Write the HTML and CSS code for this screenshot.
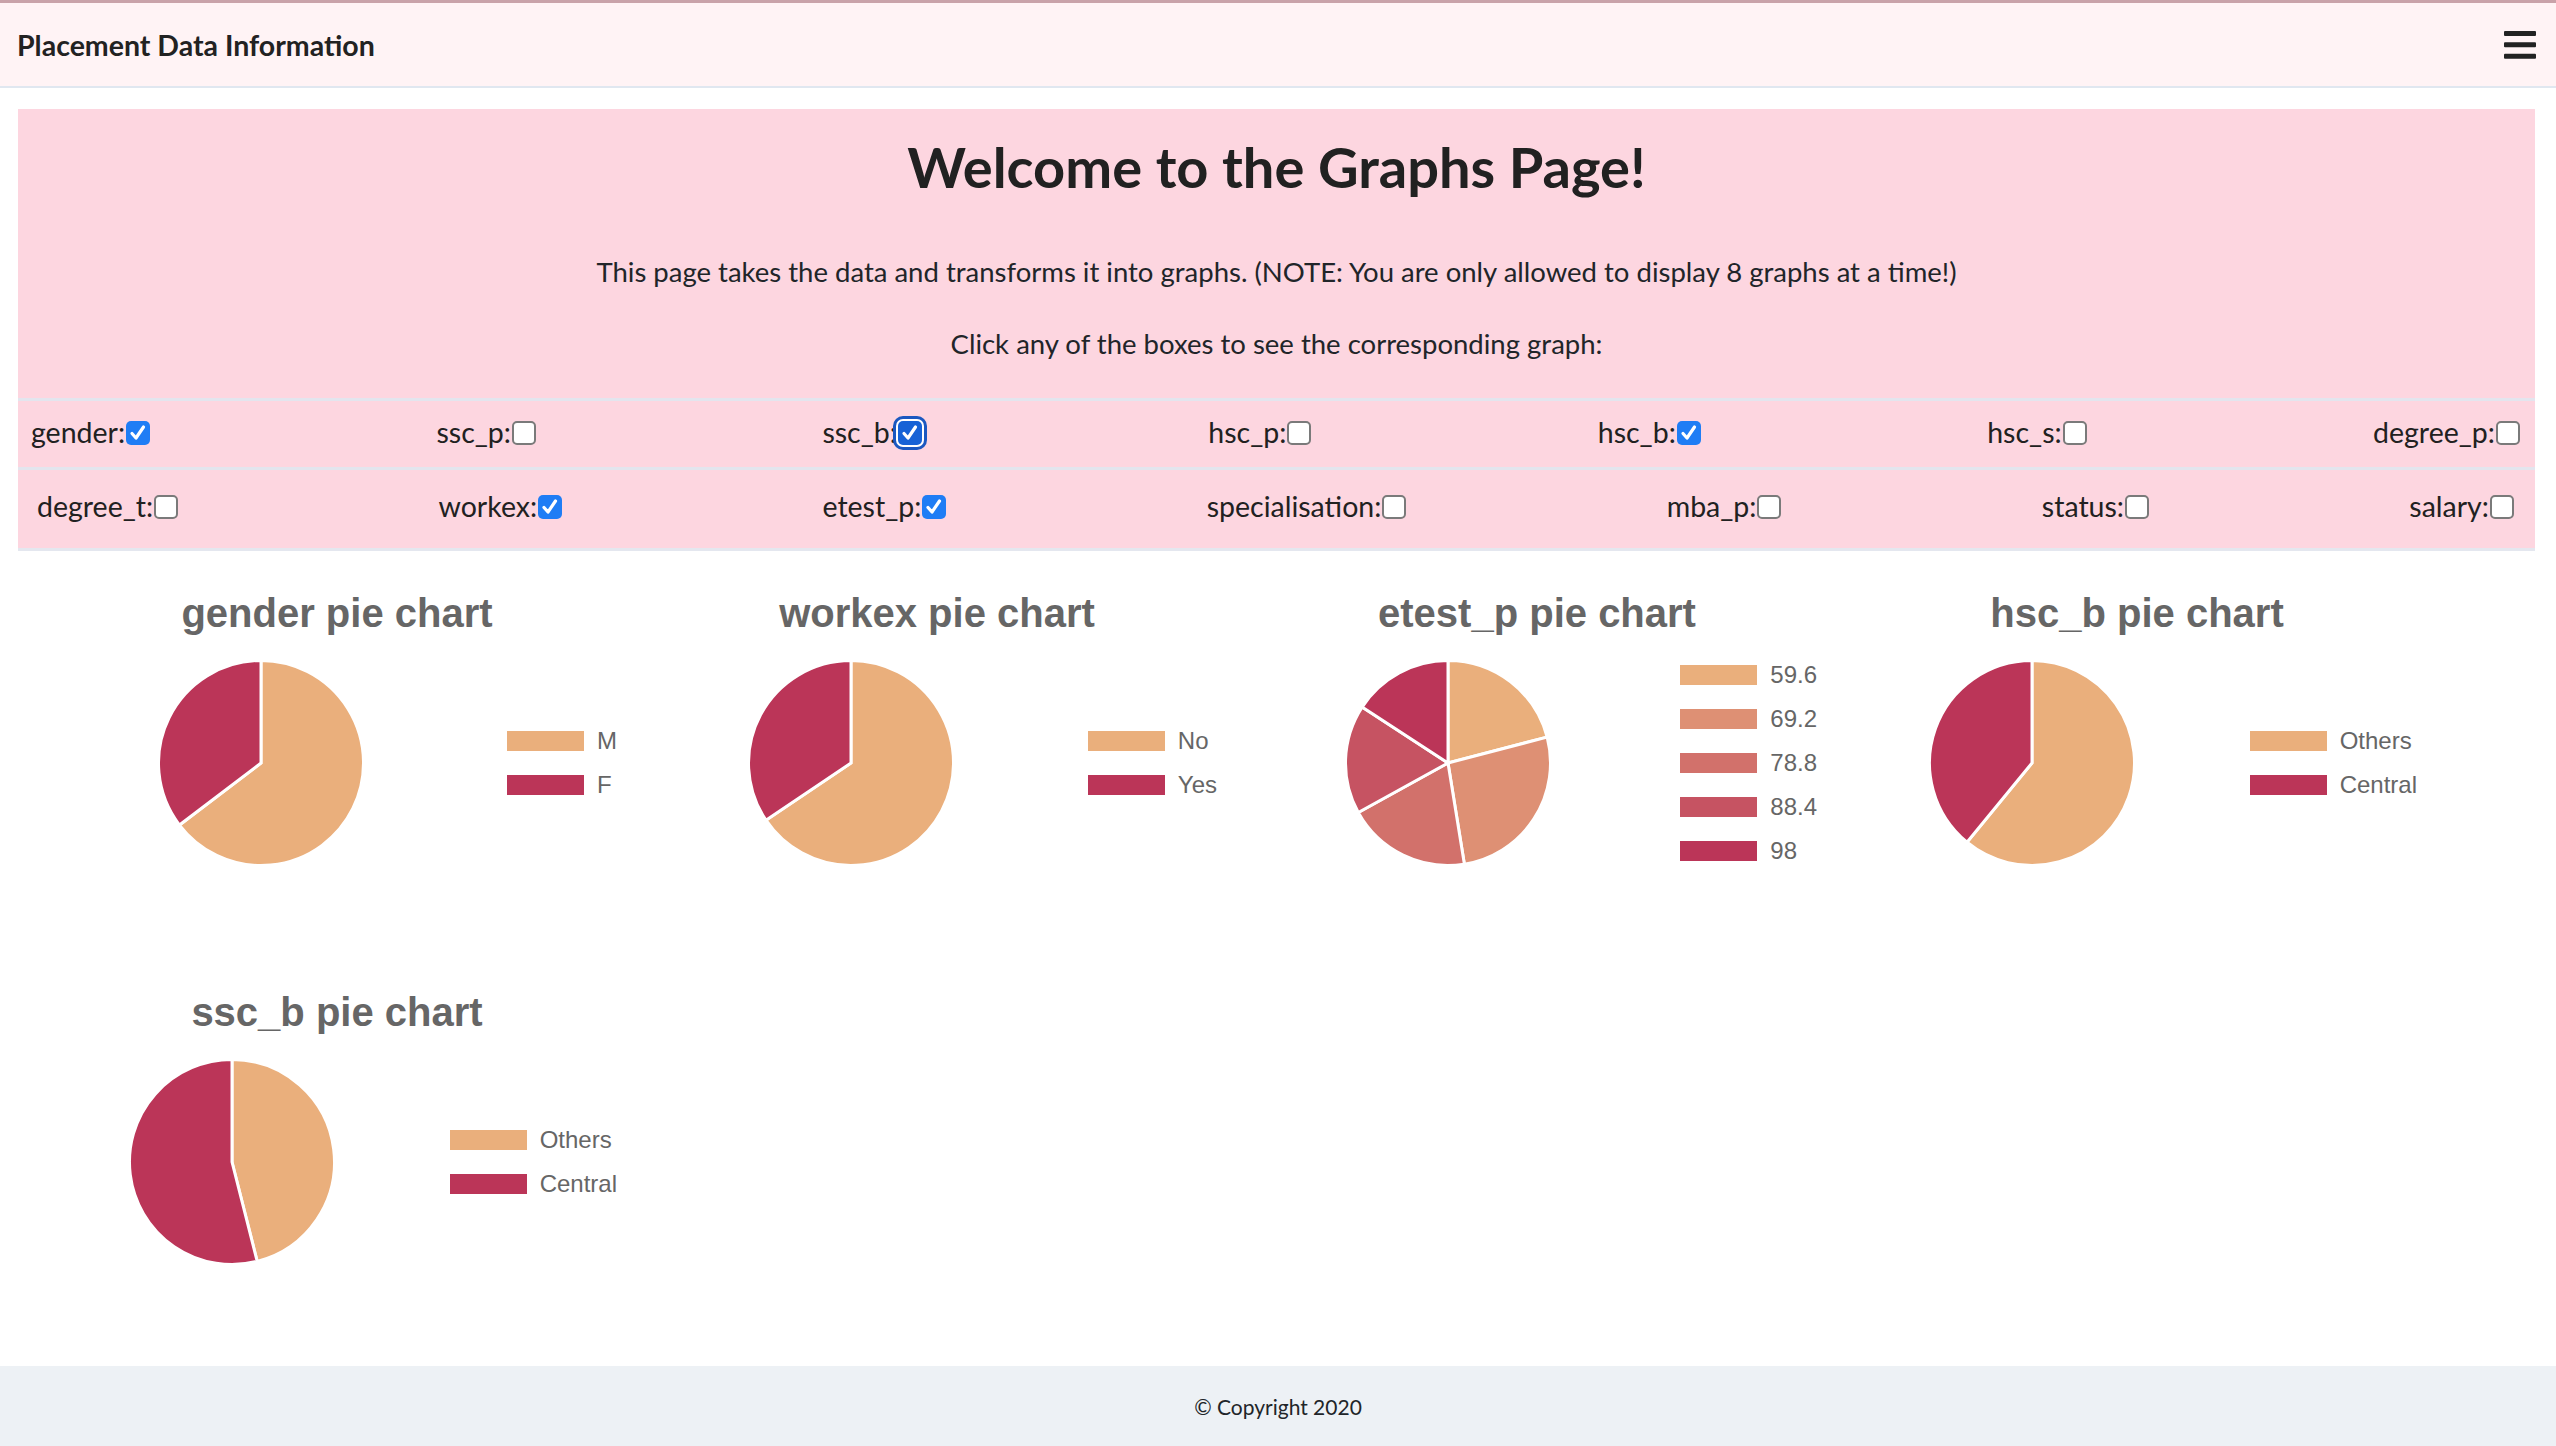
FILE: index.html
```html
<!DOCTYPE html>
<html lang="en">
<head>
<meta charset="utf-8">
<title>Placement Data Information - Graphs</title>
<link rel="stylesheet" href="styles.css">
</head>
<body>
<nav class="navbar">
  <span class="brand">Placement Data Information</span>
  <button class="toggler" aria-label="Toggle navigation">
    <svg width="32" height="28" viewBox="0 0 32 28"><rect x="0" y="0" width="32" height="5" rx="1"/><rect x="0" y="11.3" width="32" height="5" rx="1"/><rect x="0" y="22.7" width="32" height="5" rx="1"/></svg>
  </button>
</nav>
<main>
  <section class="jumbo">
    <h1>Welcome to the Graphs Page!</h1>
    <p class="lead1">This page takes the data and transforms it into graphs. (NOTE: You are only allowed to display 8 graphs at a time!)</p>
    <p class="lead2">Click any of the boxes to see the corresponding graph:</p>
    <div class="opts">
      <div class="opt-row r1">
        <label class="opt">gender:<span class="cb on"><svg viewBox="0 0 24 24"><path d="M6 12.5 L10 17 L17.5 6"/></svg></span></label>
        <label class="opt">ssc_p:<span class="cb"></span></label>
        <label class="opt">ssc_b:<span class="cb on focus"><svg viewBox="0 0 24 24"><path d="M6 12.5 L10 17 L17.5 6"/></svg></span></label>
        <label class="opt">hsc_p:<span class="cb"></span></label>
        <label class="opt">hsc_b:<span class="cb on"><svg viewBox="0 0 24 24"><path d="M6 12.5 L10 17 L17.5 6"/></svg></span></label>
        <label class="opt">hsc_s:<span class="cb"></span></label>
        <label class="opt">degree_p:<span class="cb"></span></label>
      </div>
      <div class="opt-row r2">
        <label class="opt">degree_t:<span class="cb"></span></label>
        <label class="opt">workex:<span class="cb on"><svg viewBox="0 0 24 24"><path d="M6 12.5 L10 17 L17.5 6"/></svg></span></label>
        <label class="opt">etest_p:<span class="cb on"><svg viewBox="0 0 24 24"><path d="M6 12.5 L10 17 L17.5 6"/></svg></span></label>
        <label class="opt">specialisation:<span class="cb"></span></label>
        <label class="opt">mba_p:<span class="cb"></span></label>
        <label class="opt">status:<span class="cb"></span></label>
        <label class="opt">salary:<span class="cb"></span></label>
      </div>
    </div>
  </section>

  <section class="charts">
    <div class="chart">
      <div class="chart-title">gender pie chart</div>
      <div class="chart-body">
        <div class="plot">
          <svg class="pie" width="210" height="210" viewBox="0 0 210 210">
            <path class="c1" d="M105 105 L105 2.5 A102.5 102.5 0 1 1 23.43 167.06 Z"/>
            <path class="c5" d="M105 105 L23.43 167.06 A102.5 102.5 0 0 1 105 2.5 Z"/>
          </svg>
        </div>
        <ul class="legend">
          <li><span class="sw c1"></span>M</li>
          <li><span class="sw c5"></span>F</li>
        </ul>
      </div>
    </div>

    <div class="chart">
      <div class="chart-title">workex pie chart</div>
      <div class="chart-body">
        <div class="plot">
          <svg class="pie" width="210" height="210" viewBox="0 0 210 210">
            <path class="c1" d="M105 105 L105 2.5 A102.5 102.5 0 1 1 19.94 162.17 Z"/>
            <path class="c5" d="M105 105 L19.94 162.17 A102.5 102.5 0 0 1 105 2.5 Z"/>
          </svg>
        </div>
        <ul class="legend">
          <li><span class="sw c1"></span>No</li>
          <li><span class="sw c5"></span>Yes</li>
        </ul>
      </div>
    </div>

    <div class="chart">
      <div class="chart-title">etest_p pie chart</div>
      <div class="chart-body">
        <div class="plot">
          <svg class="pie" width="210" height="210" viewBox="0 0 210 210">
            <path class="c1" d="M105 105 L105 2.5 A102.5 102.5 0 0 1 204.17 79.08 Z"/>
            <path class="c2" d="M105 105 L204.17 79.08 A102.5 102.5 0 0 1 121.40 206.18 Z"/>
            <path class="c3" d="M105 105 L121.40 206.18 A102.5 102.5 0 0 1 15.25 154.51 Z"/>
            <path class="c4" d="M105 105 L15.25 154.51 A102.5 102.5 0 0 1 19.10 49.07 Z"/>
            <path class="c5" d="M105 105 L19.10 49.07 A102.5 102.5 0 0 1 105 2.5 Z"/>
          </svg>
        </div>
        <ul class="legend">
          <li><span class="sw c1"></span>59.6</li>
          <li><span class="sw c2"></span>69.2</li>
          <li><span class="sw c3"></span>78.8</li>
          <li><span class="sw c4"></span>88.4</li>
          <li><span class="sw c5"></span>98</li>
        </ul>
      </div>
    </div>

    <div class="chart">
      <div class="chart-title">hsc_b pie chart</div>
      <div class="chart-body">
        <div class="plot">
          <svg class="pie" width="210" height="210" viewBox="0 0 210 210">
            <path class="c1" d="M105 105 L105 2.5 A102.5 102.5 0 1 1 40.00 184.26 Z"/>
            <path class="c5" d="M105 105 L40.00 184.26 A102.5 102.5 0 0 1 105 2.5 Z"/>
          </svg>
        </div>
        <ul class="legend">
          <li><span class="sw c1"></span>Others</li>
          <li><span class="sw c5"></span>Central</li>
        </ul>
      </div>
    </div>

    <div class="chart">
      <div class="chart-title">ssc_b pie chart</div>
      <div class="chart-body">
        <div class="plot">
          <svg class="pie" width="210" height="210" viewBox="0 0 210 210">
            <path class="c1" d="M105 105 L105 2.5 A102.5 102.5 0 0 1 130.19 204.35 Z"/>
            <path class="c5" d="M105 105 L130.19 204.35 A102.5 102.5 0 1 1 105 2.5 Z"/>
          </svg>
        </div>
        <ul class="legend">
          <li><span class="sw c1"></span>Others</li>
          <li><span class="sw c5"></span>Central</li>
        </ul>
      </div>
    </div>
  </section>
</main>
<footer class="footer">© Copyright 2020</footer>
</body>
</html>
```

FILE: styles.css
```css
html, body {
  margin: 0;
  padding: 0;
}

body {
  font-family: Lato, "Noto Sans", sans-serif;
  color: #212529;
  background: #ffffff;
  min-height: 100vh;
  display: flex;
  flex-direction: column;
}

/* ---------- navbar ---------- */
.navbar {
  border-top: 3px solid #c9a2a9;
  border-bottom: 2px solid #e0e7f0;
  background: #fff3f5;
  height: 83px;
  display: flex;
  align-items: center;
  justify-content: space-between;
  padding: 0 20px 0 17px;
}

.brand {
  font-weight: 700;
  font-size: 28.5px;
  color: #222222;
}

.toggler {
  border: 0;
  background: none;
  padding: 0;
  display: flex;
  align-items: center;
  cursor: pointer;
}

.toggler svg rect {
  fill: #222222;
}

/* ---------- jumbotron ---------- */
main {
  display: block;
}

.jumbo {
  margin: 21px 21px 0 18px;
  background: #fdd6e0;
  padding-top: 24px;
  text-align: center;
}

.jumbo h1 {
  margin: 0;
  font-size: 56px;
  line-height: 67px;
  font-weight: 700;
  color: #212121;
}

.lead1 {
  margin: 52px 0 0;
  font-size: 27.5px;
  line-height: 40px;
}

.lead2 {
  margin: 32px 0 0;
  font-size: 27.5px;
  line-height: 40px;
}

.opts {
  margin-top: 34px;
  border-bottom: 3px solid #e4e7ef;
  text-align: left;
}

.opt-row {
  display: flex;
  justify-content: space-between;
  align-items: center;
  border-top: 3px solid #e3e5ee;
  font-size: 28.5px;
}

.r1 {
  height: 62px;
  padding: 0 15px 4px 13px;
}

.r2 {
  height: 72px;
  padding: 0 21px 6px 19px;
}

.opt {
  white-space: nowrap;
  color: #212121;
}

.cb {
  display: inline-block;
  box-sizing: border-box;
  width: 24px;
  height: 24px;
  border: 2px solid #7a7a7a;
  border-radius: 5px;
  background: #ffffff;
  vertical-align: -2px;
  margin-left: 1px;
}

.cb svg {
  display: block;
  width: 100%;
  height: 100%;
}

.cb.on {
  border: 0;
  background: #1f7df5;
}

.cb.on svg path {
  fill: none;
  stroke: #ffffff;
  stroke-width: 3.2;
  stroke-linecap: round;
  stroke-linejoin: round;
}

.cb.focus {
  background: #1762d6;
  box-shadow: 0 0 0 2px #ffffff, 0 0 0 5px #1b58c0;
}

/* ---------- charts ---------- */
.charts {
  display: grid;
  grid-template-columns: repeat(4, 600px);
  row-gap: 99px;
  padding-left: 37px;
  margin-top: 38px;
}

.chart-title {
  text-align: center;
  font-family: "Liberation Sans", Arial, sans-serif;
  font-weight: 700;
  font-size: 40px;
  line-height: 48px;
  height: 48px;
  color: #666666;
}

.chart-body {
  display: flex;
  align-items: center;
  height: 252px;
}

.plot {
  flex: 1;
  display: flex;
  justify-content: center;
  align-items: center;
}

.pie {
  display: block;
}

.pie path {
  stroke: #ffffff;
  stroke-width: 3;
}

.legend {
  list-style: none;
  margin: 0;
  padding: 0 20px 0 22px;
  display: flex;
  flex-direction: column;
  gap: 24px;
}

.legend li {
  display: flex;
  align-items: center;
  gap: 13px;
  height: 20px;
  font-family: "Liberation Sans", Arial, sans-serif;
  font-size: 24px;
  color: #666666;
  white-space: nowrap;
}

.sw {
  display: block;
  width: 77px;
  height: 20px;
}

.c1 { fill: #eaaf7c; background: #eaaf7c; }
.c2 { fill: #de9074; background: #de9074; }
.c3 { fill: #d2716b; background: #d2716b; }
.c4 { fill: #c65362; background: #c65362; }
.c5 { fill: #bb3558; background: #bb3558; }

/* ---------- footer ---------- */
.footer {
  margin-top: auto;
  background: #edf1f5;
  height: 80px;
  display: flex;
  align-items: center;
  justify-content: center;
  font-size: 21px;
  color: #212529;
}
```
